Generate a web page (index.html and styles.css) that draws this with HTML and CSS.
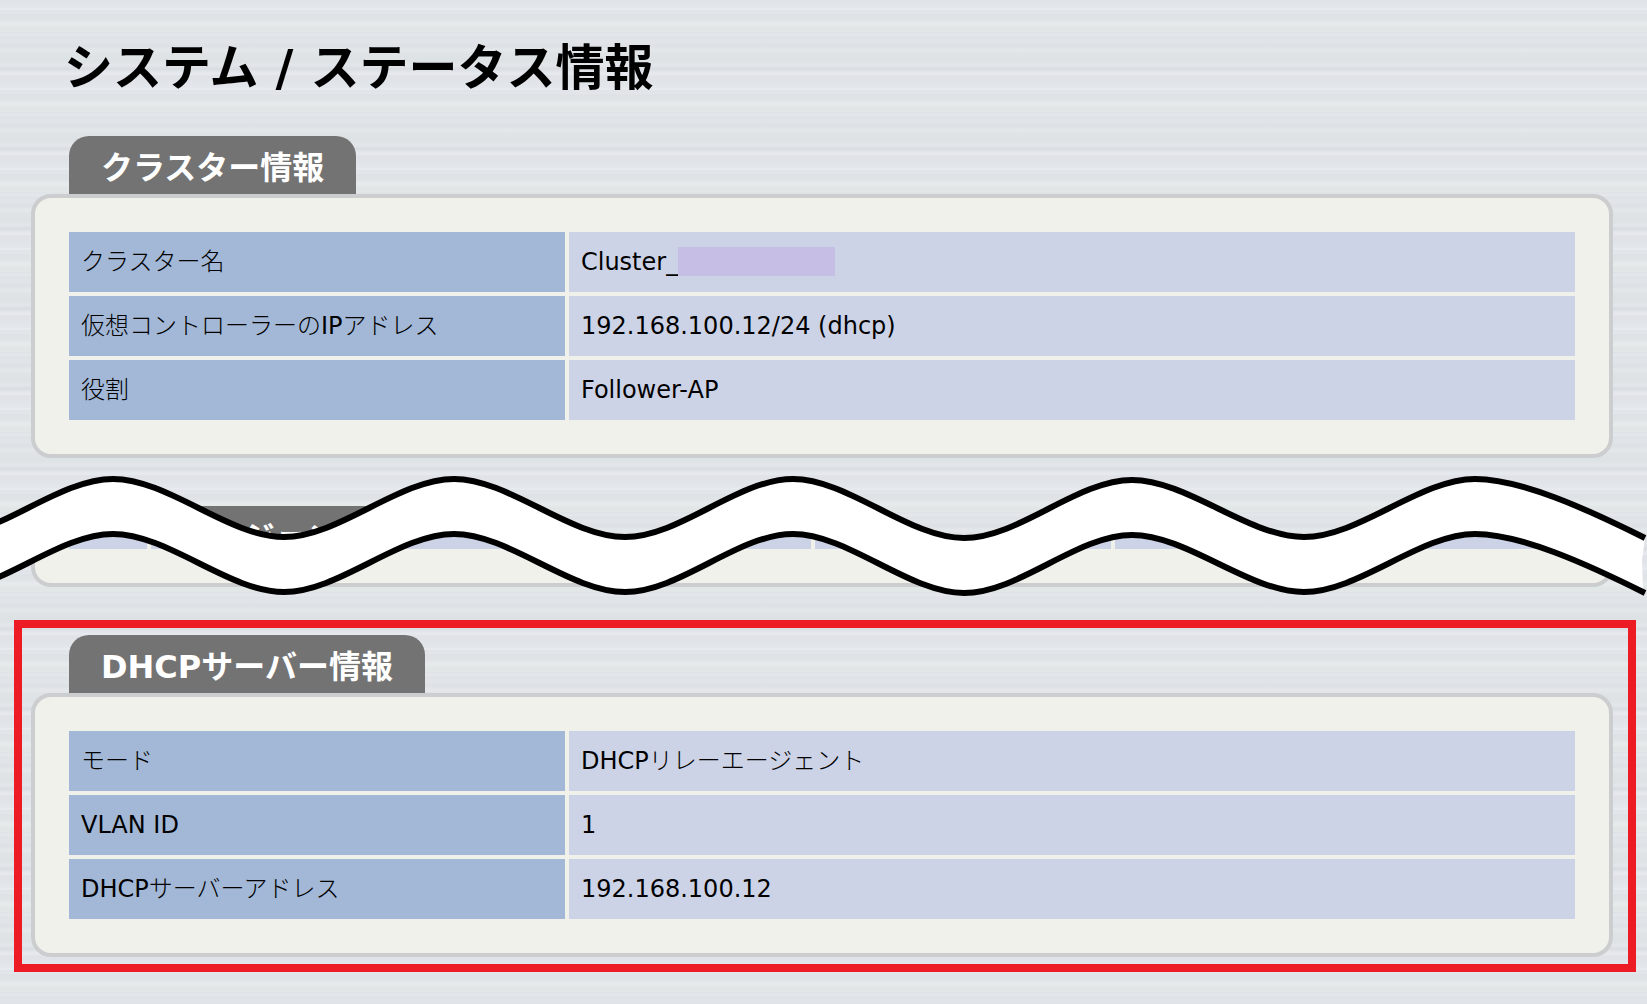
FILE: index.html
```
<!DOCTYPE html>
<html lang="ja">
<head>
    <meta charset="UTF-8">
    <meta name="viewport" content="width=device-width, initial-scale=1.0">
    <title>システム / ステータス情報</title>
    <link rel="stylesheet" href="styles.css">
</head>
<body>

    <h1>システム / ステータス情報</h1>

    <section class="section">
        <h2 class="tab">クラスター情報</h2>
        <div class="panel">
            <table class="info">
                <tr>
                    <th scope="row">クラスター名</th>
                    <td>Cluster_<span class="mask"></span></td>
                </tr>
                <tr>
                    <th scope="row">仮想コントローラーのIPアドレス</th>
                    <td>192.168.100.12/24 (dhcp)</td>
                </tr>
                <tr>
                    <th scope="row">役割</th>
                    <td>Follower-AP</td>
                </tr>
            </table>
        </div>
    </section>

    <!-- omitted part -->
    <section class="section omitted">
        <h2 class="tab">AMFエージェント</h2>
        <div class="panel">
            <table class="list">
                <tr>
                    <td class="no"></td>
                    <td></td>
                    <td class="state"></td>
                    <td class="note"></td>
                </tr>
            </table>
        </div>
        <svg class="wave" viewBox="0 0 1647 130" preserveAspectRatio="none" aria-hidden="true">
            <path fill="#fff" d="M-57 67C-2 67 58 9 113 9S229 67 284 67S399 9 454 9S570 67 625 67S738 9 793 9S909 68 964 68S1077 10 1132 10S1249 67 1304 67S1420 9 1475 9C1520 9 1585 38 1645 68L1642 90L1643 122C1585 93 1520 64 1475 64C1420 64 1359 122 1304 122S1187 65 1132 65S1019 123 964 123S848 64 793 64S680 122 625 122S509 64 454 64S339 122 284 122S168 64 113 64S-2 122 -57 122Z"/>
            <path class="line" d="M-57 67C-2 67 58 9 113 9S229 67 284 67S399 9 454 9S570 67 625 67S738 9 793 9S909 68 964 68S1077 10 1132 10S1249 67 1304 67S1420 9 1475 9C1520 9 1585 38 1645 68"/>
            <path class="line" d="M-57 122C-2 122 58 64 113 64S229 122 284 122S399 64 454 64S570 122 625 122S738 64 793 64S909 123 964 123S1077 65 1132 65S1249 122 1304 122S1420 64 1475 64C1520 64 1585 93 1645 123"/>
        </svg>
    </section>

    <div class="highlight">
        <section class="section">
            <h2 class="tab">DHCPサーバー情報</h2>
            <div class="panel">
                <table class="info">
                    <tr>
                        <th scope="row">モード</th>
                        <td>DHCPリレーエージェント</td>
                    </tr>
                    <tr>
                        <th scope="row">VLAN ID</th>
                        <td>1</td>
                    </tr>
                    <tr>
                        <th scope="row">DHCPサーバーアドレス</th>
                        <td>192.168.100.12</td>
                    </tr>
                </table>
            </div>
        </section>
    </div>

</body>
</html>
```
FILE: styles.css
```
* { box-sizing: border-box; }
body {
    margin: 0;
    padding-bottom: 32px;
    font-family: "DejaVu Sans", "Noto Sans CJK JP", sans-serif;
    font-size: 24px;
    color: #000;
    /* brushed metal, repeats every 80px */
    background: repeating-linear-gradient(#e0e3e8 0, #e3e6eb 7px, #e8ebf0 9px, #dfe2e7 11px, #e3e6eb 13px, #dee2e5 15px, #e0e4e7 20px, #e7ebed 24px, #e0e5e5 28px, #e3e7e7 31px, #dfe3e6 33px, #e5e8ec 35px, #dfe2e7 37px, #e1e4e9 42px, #dde1e5 46px, #e4e8ea 50px, #dfe3e5 54px, #dde2e4 60px, #e3e6ea 65px, #d9dce1 69px, #e1e4e9 71px, #e7eaef 74px, #e0e2e8 76px, #e0e3e8 80px);
}

h1 { margin: 0; padding: 37px 64px 35px; font-size: 49px; line-height: 64px; }

.section { margin: 0 34px 48px 31px; }
.tab { width: fit-content; height: 58px; margin: 0 0 0 38px; padding: 0 32px; border-radius: 20px 20px 0 0; background: #737373; color: #fff; font-size: 32px; line-height: 64px; white-space: nowrap; }
.panel { padding: 34px; border: 4px solid #cccdcf; border-radius: 20px; background: #f0f1eb; }

table { width: 100%; border-collapse: separate; border-spacing: 0; }
.info { font-family: "DejaVu Sans", "Noto Sans CJK JP Light", "Noto Sans CJK JP", sans-serif; }
.info tr { display: flex; gap: 4px; }
.info tr + tr { margin-top: 4px; }
.info th, .info td { height: 60px; padding: 0 12px; line-height: 60px; white-space: nowrap; }
.info th { width: calc(33% - 1px); background: #a3b8d6; font-weight: normal; text-align: left; }
.info td { flex: 1; background: #cdd3e6; }
.mask { display: inline-block; width: 157px; height: 29px; background: #c7bee6; vertical-align: -6px; }

.omitted { position: relative; margin-bottom: 33px; }
.omitted .tab { margin-bottom: -28px; }
.omitted .panel { position: relative; padding-top: 0; border-top: 0; border-radius: 0 0 20px 20px; }
.list tr { display: flex; gap: 4px; }
.list td { flex: 1; height: 13px; padding: 0; background: #cdd3e6; }
.list .no { flex: 0 0 78px; }
.list .state { flex: 0 0 296px; }
.list .note { flex: 0 0 460px; }

.wave { position: absolute; top: -36px; left: -31px; width: calc(100% + 65px); height: 130px; }
.line { fill: none; stroke: #000; stroke-width: 6; }

.highlight { margin: 0 11px 0 14px; padding: 7px 15px 7px 9px; border: 8px solid #ed1c24; }
.highlight .section { margin: 0; }
```
